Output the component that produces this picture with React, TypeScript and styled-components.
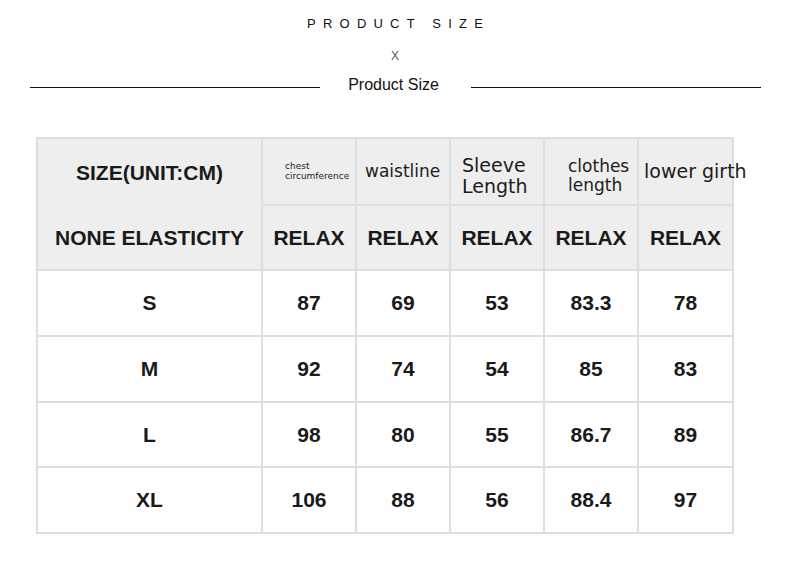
import React from "react";
import styled, { createGlobalStyle } from "styled-components";

const GlobalStyle = createGlobalStyle`
  body {
    margin: 0;
    background: #ffffff;
    font-family: "Liberation Sans", Arial, sans-serif;
    color: #1a1a1a;
  }
`;

const Page = styled.div`
  width: 790px;
  height: 570px;
  overflow: hidden;
  padding-top: 16px;
  box-sizing: border-box;
`;

const Title = styled.div`
  text-align: center;
  font-size: 13px;
  line-height: 15px;
  letter-spacing: 7.2px;
  padding-left: 7.2px;
  color: #111;
`;

const Cross = styled.div`
  text-align: center;
  margin-top: 18px;
  font-size: 12px;
  line-height: 14px;
  color: #555;
  font-weight: 300;
`;

const Divider = styled.div`
  display: grid;
  grid-template-columns: 290px 151px 290px;
  align-items: center;
  margin: 13px 0 0 30px;
  width: 731px;
`;

const Line = styled.div`
  height: 1px;
  background: #111;
  margin-top: 5px;
`;

const DividerText = styled.div`
  text-align: center;
  font-size: 16px;
  line-height: 18px;
  color: #111;
  padding-right: 4px;
`;

const Grid = styled.div`
  display: grid;
  grid-template-columns: 225px repeat(4, 94px) 95px;
  grid-template-rows: 67px 65px 66px 66px 65px 66px;
  width: max-content;
  margin: 43px 0 0 36px;
  border-top: 2px solid #dedede;
  border-left: 2px solid #dedede;
`;

const Cell = styled.div<{ head?: boolean }>`
  box-sizing: border-box;
  border-right: 2px solid #dedede;
  border-bottom: 2px solid #dedede;
  background: ${(p) => (p.head ? "#eeeeee" : "#ffffff")};
  display: flex;
  align-items: center;
  justify-content: center;
  font-weight: 700;
  font-size: 21px;
  color: #1a1a1a;
`;

const SizeHead = styled(Cell)`
  grid-row: span 2;
  flex-direction: column;
  & > div {
    display: flex;
    align-items: center;
  }
  & > div:first-child {
    height: 67px;
  }
  & > div:last-child {
    height: 63px;
  }
`;

const LabelCell = styled(Cell)<{ size: number; pad: number; drop: number }>`
  justify-content: flex-start;
  padding-left: ${(p) => p.pad}px;
  padding-top: ${(p) => p.drop}px;
  font-family: "DejaVu Sans", sans-serif;
  font-weight: 400;
  font-size: ${(p) => p.size}px;
  line-height: 1.1;
  white-space: nowrap;
  overflow: visible;
  position: relative;
  z-index: 1;
  color: #1c1c1c;
`;

const labels = [
  { text: ["chest", "circumference"], size: 9, pad: 22, drop: 0 },
  { text: ["waistline"], size: 17, pad: 8, drop: 0 },
  { text: ["Sleeve", "Length"], size: 19, pad: 11, drop: 8 },
  { text: ["clothes", "length"], size: 17, pad: 23, drop: 8 },
  { text: ["lower girth"], size: 19, pad: 5, drop: 0 },
];

const rows = [
  ["S", "87", "69", "53", "83.3", "78"],
  ["M", "92", "74", "54", "85", "83"],
  ["L", "98", "80", "55", "86.7", "89"],
  ["XL", "106", "88", "56", "88.4", "97"],
];

export default function App() {
  return (
    <Page>
      <GlobalStyle />
      <Title>PRODUCT SIZE</Title>
      <Cross>X</Cross>
      <Divider>
        <Line />
        <DividerText>Product Size</DividerText>
        <Line />
      </Divider>
      <Grid>
        <SizeHead head>
          <div>SIZE(UNIT:CM)</div>
          <div>NONE ELASTICITY</div>
        </SizeHead>
        {labels.map((l) => (
          <LabelCell
            head
            key={l.text.join(" ")}
            size={l.size}
            pad={l.pad}
            drop={l.drop}
          >
            <div>
              {l.text.map((t) => (
                <div key={t}>{t}</div>
              ))}
            </div>
          </LabelCell>
        ))}
        {labels.map((l) => (
          <Cell head key={"r" + l.text.join(" ")}>
            RELAX
          </Cell>
        ))}
        {rows.map((r) =>
          r.map((v, i) => <Cell key={r[0] + i}>{v}</Cell>)
        )}
      </Grid>
    </Page>
  );
}
